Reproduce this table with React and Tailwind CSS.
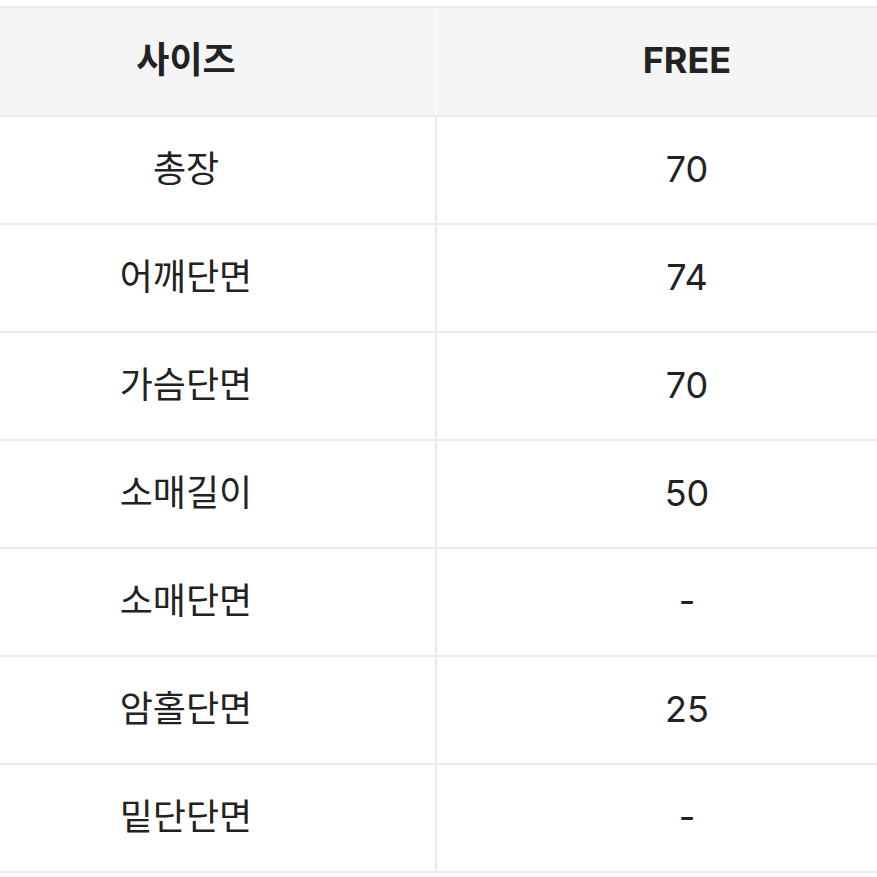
import React from "react";

const rows = [
  ["총장", "70"],
  ["어깨단면", "74"],
  ["가슴단면", "70"],
  ["소매길이", "50"],
  ["소매단면", "-"],
  ["암홀단면", "25"],
  ["밑단단면", "-"],
];

export default function App() {
  return (
    <div
      className="w-[877px] h-[877px] overflow-hidden bg-white text-[#222]"
      style={{ fontFamily: '"Inter", "Noto Sans CJK KR", sans-serif' }}
    >
      <div className="w-[1000px] ml-[-63px] mt-[6px] border-t-2 border-[#ebebeb]">
        <div className="flex h-[109px] bg-[#f5f5f5] border-b-2 border-[#ebebeb]">
          <div className="w-[500px] flex items-center justify-center pb-[3px] border-r-2 border-[#f9f9f9] text-[36px] font-bold">
            사이즈
          </div>
          <div className="flex-1 flex items-center justify-center pb-[3px] text-[36px] font-bold">
            FREE
          </div>
        </div>
        {rows.map(([label, value]) => (
          <div key={label} className="flex h-[108px] border-b-2 border-[#ebebeb]">
            <div className="w-[500px] flex items-center justify-center pb-[3px] border-r-2 border-[#ebebeb] text-[36px]">
              {label}
            </div>
            <div className="flex-1 flex items-center justify-center pb-[3px] text-[36px]">
              {value}
            </div>
          </div>
        ))}
      </div>
    </div>
  );
}
